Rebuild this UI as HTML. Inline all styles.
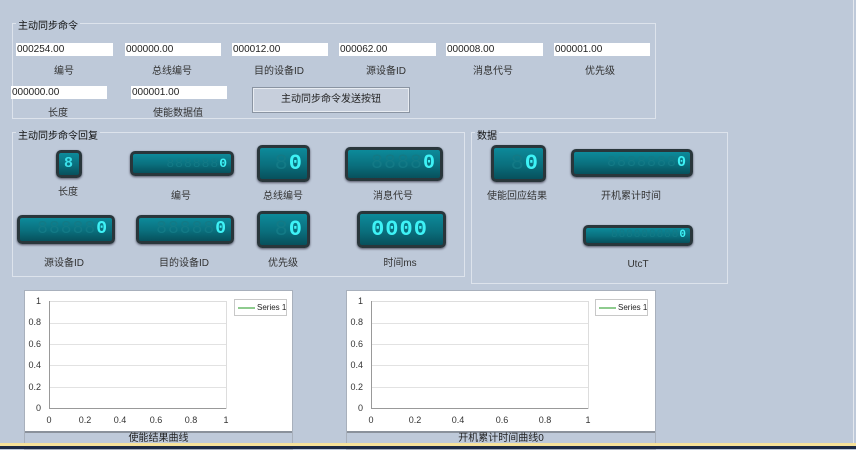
<!DOCTYPE html>
<html><head><meta charset="utf-8"><style>
*{margin:0;padding:0;box-sizing:border-box}
body{width:856px;height:449px;background:#bec9d9;position:relative;overflow:hidden;font-family:"Liberation Sans","Noto Sans CJK SC",sans-serif;font-size:10px;color:#222}
.a{position:absolute}
.grp{position:absolute;border:1px solid #dde3ec}
.tt{position:absolute;background:#bec9d9;padding:0 2px;font-size:10px;color:#111}
.in{position:absolute;height:13px;background:#fff;font-size:10px;line-height:13px;padding-left:1px;color:#222}
.lb{position:absolute;font-size:10px;transform:translateX(-50%);white-space:nowrap;color:#333}
.btn{position:absolute;border:1px solid #8a94a2;background:#c7cfdc;box-shadow:inset 0 0 0 1px #e8ecf2;text-align:center;font-size:10px}
.d{position:absolute;border-radius:5px;background:linear-gradient(#0d8a9a,#0a6f7d 55%,#07505c);border:3px solid #29363b;box-shadow:0 1px 2px #556;overflow:hidden;text-align:right;font-family:"Liberation Mono",monospace;color:#3ef2f6;font-weight:bold;letter-spacing:1px;white-space:nowrap}
.d span{color:#137a86;font-weight:normal}
.chart{position:absolute;background:#fff;border:1px solid #a8b0bc}
.bar{position:absolute;left:0;right:0;bottom:0;height:14px;background:#bec9d9;border-top:2px solid #8a919b;text-align:center;font-size:10px;line-height:12px}
.yl{position:absolute;font-size:9px;color:#333;text-align:right;width:20px}
.xl{position:absolute;font-size:9px;color:#333;transform:translateX(-50%)}
.gl{position:absolute;height:1px;background:#e2e2e2}
.leg{position:absolute;border:1px solid #c8c8c8;font-size:8px;line-height:15px;padding-left:22px;white-space:nowrap}
.leg:before{content:"";position:absolute;left:3px;top:7px;width:17px;height:2px;background:#8ecb8e}
</style></head><body>
<div class="grp" style="left:12px;top:23px;width:644px;height:96px"></div>
<div class="tt" style="left:16px;top:17px">主动同步命令</div>
<div class="in" style="left:16px;top:43px;width:97px">000254.00</div>
<div class="in" style="left:125px;top:43px;width:96px">000000.00</div>
<div class="in" style="left:232px;top:43px;width:96px">000012.00</div>
<div class="in" style="left:339px;top:43px;width:97px">000062.00</div>
<div class="in" style="left:446px;top:43px;width:97px">000008.00</div>
<div class="in" style="left:554px;top:43px;width:96px">000001.00</div>
<div class="lb" style="left:64px;top:62px">编号</div>
<div class="lb" style="left:172px;top:62px">总线编号</div>
<div class="lb" style="left:279px;top:62px">目的设备ID</div>
<div class="lb" style="left:386px;top:62px">源设备ID</div>
<div class="lb" style="left:493px;top:62px">消息代号</div>
<div class="lb" style="left:600px;top:62px">优先级</div>
<div class="in" style="left:11px;top:86px;width:96px">000000.00</div>
<div class="in" style="left:131px;top:86px;width:96px">000001.00</div>
<div class="lb" style="left:58px;top:104px">长度</div>
<div class="lb" style="left:178px;top:104px">使能数据值</div>
<div class="btn" style="left:252px;top:87px;width:158px;height:26px;line-height:24px">主动同步命令发送按钮</div>
<div class="grp" style="left:12px;top:132px;width:453px;height:145px"></div>
<div class="tt" style="left:16px;top:127px">主动同步命令回复</div>
<div class="d" style="left:56px;top:150px;width:26px;height:28px;font-size:15px;line-height:22px;text-align:center;color:#3be0ea">8</div>
<div class="d" style="left:130px;top:151px;width:104px;height:25px;font-size:13px;line-height:19px;padding-right:3px"><span>888888</span>0</div>
<div class="d" style="left:257px;top:145px;width:53px;height:37px;font-size:22px;line-height:31px;padding-right:4px"><span>8</span>0</div>
<div class="d" style="left:345px;top:147px;width:98px;height:34px;font-size:20px;line-height:28px;padding-right:4px"><span>8888</span>0</div>
<div class="d" style="left:17px;top:215px;width:98px;height:29px;font-size:18px;line-height:23px;padding-right:4px"><span>88888</span>0</div>
<div class="d" style="left:136px;top:215px;width:98px;height:29px;font-size:18px;line-height:23px;padding-right:4px"><span>88888</span>0</div>
<div class="d" style="left:257px;top:211px;width:53px;height:37px;font-size:22px;line-height:31px;padding-right:4px"><span>8</span>0</div>
<div class="d" style="left:357px;top:211px;width:89px;height:37px;font-size:22px;line-height:31px;padding-right:4px;text-align:center">0000</div>
<div class="lb" style="left:68px;top:183px">长度</div>
<div class="lb" style="left:181px;top:187px">编号</div>
<div class="lb" style="left:283px;top:187px">总线编号</div>
<div class="lb" style="left:393px;top:187px">消息代号</div>
<div class="lb" style="left:64px;top:254px">源设备ID</div>
<div class="lb" style="left:184px;top:254px">目的设备ID</div>
<div class="lb" style="left:283px;top:254px">优先级</div>
<div class="lb" style="left:400px;top:254px">时间ms</div>
<div class="grp" style="left:471px;top:132px;width:257px;height:152px"></div>
<div class="tt" style="left:475px;top:127px">数据</div>
<div class="d" style="left:491px;top:145px;width:55px;height:37px;font-size:22px;line-height:31px;padding-right:4px"><span>8</span>0</div>
<div class="d" style="left:571px;top:149px;width:122px;height:28px;font-size:15px;line-height:22px;padding-right:3px"><span>8888888</span>0</div>
<div class="d" style="left:583px;top:225px;width:110px;height:21px;font-size:11px;line-height:15px;padding-right:3px"><span>888888888</span>0</div>
<div class="lb" style="left:517px;top:187px">使能回应结果</div>
<div class="lb" style="left:631px;top:187px">开机累计时间</div>
<div class="lb" style="left:638px;top:259px">UtcT</div>
<div class="chart" style="left:24px;top:290px;width:269px;height:160px">
 <div class="gl" style="left:24px;top:10px;width:178px;background:#ddd"></div>
 <div class="gl" style="left:24px;top:32px;width:178px"></div>
 <div class="gl" style="left:24px;top:53px;width:178px"></div>
 <div class="gl" style="left:24px;top:74px;width:178px"></div>
 <div class="gl" style="left:24px;top:96px;width:178px"></div>
 <div class="a" style="left:24px;top:10px;width:1px;height:108px;background:#999"></div>
 <div class="a" style="left:24px;top:117px;width:178px;height:1px;background:#999"></div>
 <div class="a" style="left:201px;top:10px;width:1px;height:108px;background:#ddd"></div>
 <div class="yl" style="left:-4px;top:5px">1</div><div class="yl" style="left:-4px;top:26px">0.8</div><div class="yl" style="left:-4px;top:48px">0.6</div><div class="yl" style="left:-4px;top:69px">0.4</div><div class="yl" style="left:-4px;top:91px">0.2</div><div class="yl" style="left:-4px;top:112px">0</div>
 <div class="xl" style="left:24px;top:124px">0</div><div class="xl" style="left:60px;top:124px">0.2</div><div class="xl" style="left:95px;top:124px">0.4</div><div class="xl" style="left:131px;top:124px">0.6</div><div class="xl" style="left:166px;top:124px">0.8</div><div class="xl" style="left:201px;top:124px">1</div>
 <div class="leg" style="left:209px;top:8px;width:53px;height:17px">Series 1</div>
 <div class="bar" style="bottom:4px">使能结果曲线</div>
</div>
<div class="chart" style="left:346px;top:290px;width:310px;height:160px">
 <div class="gl" style="left:24px;top:10px;width:218px;background:#ddd"></div>
 <div class="gl" style="left:24px;top:32px;width:218px"></div>
 <div class="gl" style="left:24px;top:53px;width:218px"></div>
 <div class="gl" style="left:24px;top:74px;width:218px"></div>
 <div class="gl" style="left:24px;top:96px;width:218px"></div>
 <div class="a" style="left:24px;top:10px;width:1px;height:108px;background:#999"></div>
 <div class="a" style="left:24px;top:117px;width:218px;height:1px;background:#999"></div>
 <div class="a" style="left:241px;top:10px;width:1px;height:108px;background:#ddd"></div>
 <div class="yl" style="left:-4px;top:5px">1</div><div class="yl" style="left:-4px;top:26px">0.8</div><div class="yl" style="left:-4px;top:48px">0.6</div><div class="yl" style="left:-4px;top:69px">0.4</div><div class="yl" style="left:-4px;top:91px">0.2</div><div class="yl" style="left:-4px;top:112px">0</div>
 <div class="xl" style="left:24px;top:124px">0</div><div class="xl" style="left:68px;top:124px">0.2</div><div class="xl" style="left:111px;top:124px">0.4</div><div class="xl" style="left:155px;top:124px">0.6</div><div class="xl" style="left:198px;top:124px">0.8</div><div class="xl" style="left:241px;top:124px">1</div>
 <div class="leg" style="left:248px;top:8px;width:53px;height:17px">Series 1</div>
 <div class="bar" style="bottom:4px">开机累计时间曲线0</div>
</div>
<div class="a" style="left:853px;top:0;width:1px;height:443px;background:#e4e8ee"></div>
<div class="a" style="left:0;top:443px;width:856px;height:3px;background:#f7e29a"></div>
<div class="a" style="left:0;top:446px;width:856px;height:3px;background:#1d2a44"></div>
</body></html>
